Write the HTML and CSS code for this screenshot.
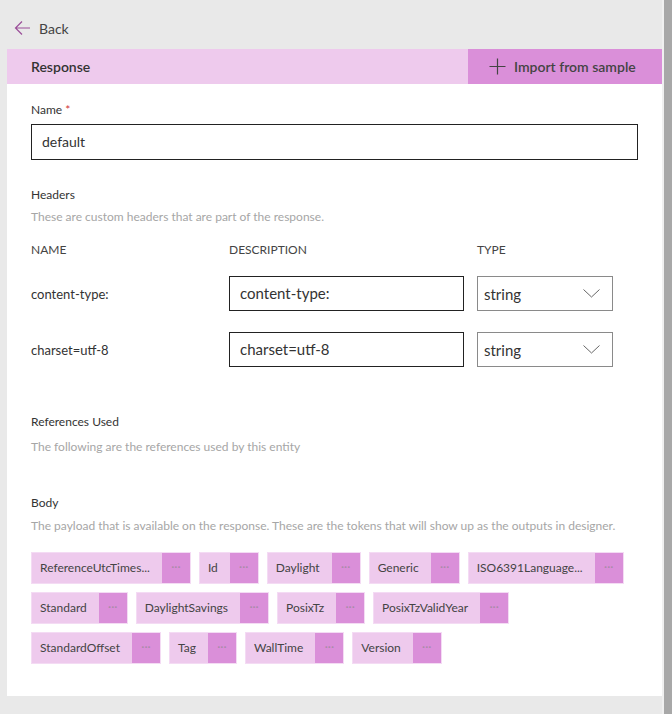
FILE: index.html
```html
<!DOCTYPE html>
<html lang="en">
<head>
    <meta charset="UTF-8">
    <meta name="viewport" content="width=device-width, initial-scale=1.0">
    <title>Response</title>
    <link rel="stylesheet" href="styles.css">
</head>
<body>
    <div class="main">
        <div class="topbar">
            <a class="back" href="#">
                <svg width="17" height="16" viewBox="0 0 17 16">
                    <path d="M16 8H1.5M8 1.5L1.5 8L8 14.5" fill="none" stroke="#9b4f99" stroke-width="1.2"/>
                </svg>
                <span>Back</span>
            </a>
        </div>

        <div class="panel">
            <div class="panel-header">
                <span class="panel-title">Response</span>
                <button class="import-btn">
                    <svg width="17" height="17" viewBox="0 0 17 17">
                        <path d="M8.5 0.5V16.5M0.5 8.5H16.5" fill="none" stroke="#444" stroke-width="1.2"/>
                    </svg>
                    Import from sample
                </button>
            </div>

            <div class="form">
                <label class="label">Name <span class="req">*</span></label>
                <div class="name-input">default</div>

                <div class="section headers">
                    <div class="label">Headers</div>
                    <div class="hint">These are custom headers that are part of the response.</div>

                    <div class="grid-head">
                        <div class="col-head">NAME</div>
                        <div class="col-head">DESCRIPTION</div>
                        <div class="col-head">TYPE</div>
                    </div>

                    <div class="grid">
                        <div class="cell-name">content-type:</div>
                        <div class="text-box">content-type:</div>
                        <div class="select-box">
                            <span>string</span>
                            <svg width="17" height="9" viewBox="0 0 17 9">
                                <path d="M0.5 0.5L8.5 8L16.5 0.5" fill="none" stroke="#666" stroke-width="1"/>
                            </svg>
                        </div>

                        <div class="cell-name">charset=utf-8</div>
                        <div class="text-box">charset=utf-8</div>
                        <div class="select-box">
                            <span>string</span>
                            <svg width="17" height="9" viewBox="0 0 17 9">
                                <path d="M0.5 0.5L8.5 8L16.5 0.5" fill="none" stroke="#666" stroke-width="1"/>
                            </svg>
                        </div>
                    </div>
                </div>

                <div class="section refs">
                    <div class="label">References Used</div>
                    <div class="hint">The following are the references used by this entity</div>
                </div>

                <div class="section body-section">
                    <div class="label">Body</div>
                    <div class="hint">The payload that is available on the response. These are the tokens that will show up as the outputs in designer.</div>

                    <div class="tokens" id="tokens"></div>
                </div>
            </div>
        </div>
    </div>
    <div class="scroll-track"><div class="scroll-thumb"></div></div>

    <script>
        // names as they are shown (long ones are already cut)
        const rows = [
            ['ReferenceUtcTimes...', 'Id', 'Daylight', 'Generic', 'ISO6391Language...'],
            ['Standard', 'DaylightSavings', 'PosixTz', 'PosixTzValidYear'],
            ['StandardOffset', 'Tag', 'WallTime', 'Version']
        ];
        const box = document.getElementById('tokens');
        rows.forEach(names => {
            const row = document.createElement('div');
            row.className = 'token-row';
            names.forEach(n => {
                const t = document.createElement('div');
                t.className = 'token';
                const name = document.createElement('span');
                name.className = 'token-name';
                name.textContent = n;
                const more = document.createElement('span');
                more.className = 'token-more';
                more.textContent = '···';
                t.appendChild(name);
                t.appendChild(more);
                row.appendChild(t);
            });
            box.appendChild(row);
        });
    </script>
</body>
</html>
```

FILE: styles.css
```css
body {
    margin: 0;
    display: flex;
    background-color: #e9e9e9;
    font-family: "Segoe UI", Lato, "Liberation Sans", sans-serif;
    color: #333;
    height: 714px;
    overflow: hidden;
}

.main {
    width: 662px;
}

.topbar {
    height: 49px;
    box-sizing: border-box;
    padding: 19px 0 0 14px;
}

.back {
    display: flex;
    align-items: center;
    gap: 8px;
    height: 18px;
    color: #444;
    text-decoration: none;
    font-size: 14px;
}

.panel {
    margin-left: 7px;
    width: 655px;
    height: 647px;
    background-color: #fff;
}

.panel-header {
    display: flex;
    justify-content: space-between;
    height: 35px;
    background-color: #eecaed;
}

.panel-title {
    padding-left: 24px;
    line-height: 35px;
    font-size: 14px;
    font-weight: 600;
    color: #333;
}

.import-btn {
    display: flex;
    align-items: center;
    gap: 8px;
    width: 194px;
    padding: 0 0 0 21px;
    border: none;
    background-color: #da8fd9;
    font-family: inherit;
    font-size: 14px;
    font-weight: 600;
    color: #444;
    cursor: pointer;
}

.form {
    padding: 18px 24px 0 24px;
}

.label {
    display: block;
    font-size: 12px;
    line-height: 16px;
    color: #333;
}

.req {
    color: #d13438;
}

.name-input {
    margin-top: 6px;
    height: 36px;
    box-sizing: border-box;
    border: 1px solid #222;
    padding: 0 10px;
    line-height: 34px;
    font-size: 14px;
}

.hint {
    font-size: 12px;
    line-height: 16px;
    color: #a6a6a6;
}

.headers {
    margin-top: 27px;
}

.headers .hint {
    margin-top: 6px;
}

.grid-head,
.grid {
    display: grid;
    grid-template-columns: 198px 248px 136px;
}

.grid-head {
    margin: 17px 0 18px 0;
}

.grid {
    grid-auto-rows: 35px;
    row-gap: 21px;
}

.col-head {
    font-size: 12px;
    line-height: 16px;
    color: #444;
}

.cell-name {
    display: flex;
    align-items: center;
    font-size: 13px;
}

.text-box {
    width: 235px;
    box-sizing: border-box;
    border: 1px solid #222;
    padding: 0 10px;
    line-height: 33px;
    font-size: 15px;
}

.select-box {
    display: flex;
    align-items: center;
    justify-content: space-between;
    box-sizing: border-box;
    border: 1px solid #8a8a8a;
    padding: 0 12px 0 6px;
    font-size: 15px;
}

.refs {
    margin-top: 47px;
}

.refs .hint {
    margin-top: 9px;
}

.body-section {
    margin-top: 40px;
}

.body-section .hint {
    margin-top: 7px;
}

.tokens {
    display: flex;
    flex-direction: column;
    gap: 8px;
    margin-top: 18px;
}

.token-row {
    display: flex;
    gap: 8px;
}

.token {
    display: flex;
    height: 32px;
    box-sizing: border-box;
    border: 1px solid #f4dbf4;
    background-color: #eecaed;
}

.token-name {
    padding: 0 12px 0 8px;
    line-height: 30px;
    font-size: 12px;
    color: #444;
    white-space: nowrap;
}

.token-more {
    width: 28px;
    background-color: #da8fd9;
    text-align: center;
    line-height: 28px;
    font-size: 12px;
    color: #a98aa8;
}

.scroll-track {
    width: 10px;
    height: 714px;
    box-sizing: border-box;
    padding-left: 2px;
    background-color: #f0f0f0;
}

.scroll-thumb {
    height: 100%;
    background-color: #a8a8a8;
}
```
